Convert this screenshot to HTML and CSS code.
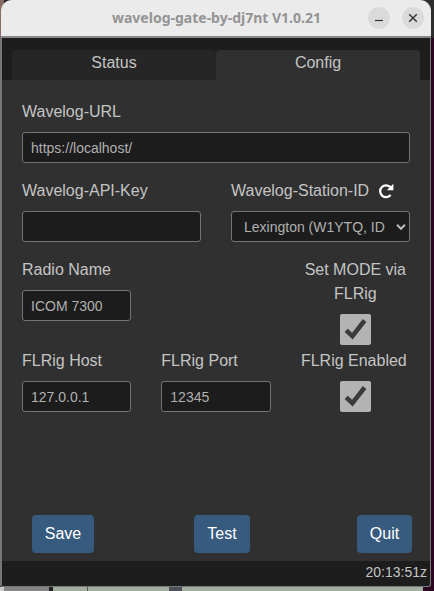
FILE: index.html
```html
<!DOCTYPE html>
<html lang="en">
<head>
<meta charset="utf-8">
<title>wavelog-gate-by-dj7nt V1.0.21</title>
<link rel="stylesheet" href="styles.css">
</head>
<body>
<div class="window">
  <header class="titlebar">
    <span class="title">wavelog-gate-by-dj7nt V1.0.21</span>
    <span class="controls">
      <span class="control"><svg width="22" height="22" viewBox="0 0 22 22"><path d="M7 13.5h8" stroke="#333" stroke-width="1.2"/></svg></span>
      <span class="control"><svg width="22" height="22" viewBox="0 0 22 22"><path d="M7.2 7.2l7.6 7.6M14.8 7.2l-7.6 7.6" stroke="#333" stroke-width="1.4"/></svg></span>
    </span>
  </header>
  <div class="app">
    <nav class="tabs">
      <div class="tab">Status</div>
      <div class="tab active">Config</div>
    </nav>
    <main class="content">
      <div class="row one">
        <div class="field"><label>Wavelog-URL</label><input type="text" value="https://localhost/"></div>
      </div>
      <div class="row two">
        <div class="field"><label>Wavelog-API-Key</label><input type="text"></div>
        <div class="field">
          <label>Wavelog-Station-ID <svg class="reload" width="16" height="16" viewBox="0 0 16 16"><path d="M12.5 4.3A5.9 5.9 0 1 0 12.6 12" fill="none" stroke="#fff" stroke-width="2.3"/><path d="M15.4 .8v6.5H8.9z" fill="#fff"/></svg></label>
          <div class="select">Lexington (W1YTQ, ID<svg class="arrow" width="10" height="8" viewBox="0 0 10 8"><path d="M1 1.8l4 4 4-4" fill="none" stroke="#bbb" stroke-width="2"/></svg></div>
        </div>
      </div>
      <div class="row three radio">
        <div class="field"><label>Radio Name</label><input type="text" value="ICOM 7300"></div>
        <div></div>
        <div class="field center"><label>Set MODE via FLRig</label><span class="check"><svg width="31" height="31" viewBox="0 0 31 31"><path d="M6.2 16.4L12.4 22.2 24.6 6.5" fill="none" stroke="#3b3b3b" stroke-width="4.6"/></svg></span></div>
      </div>
      <div class="row three">
        <div class="field"><label>FLRig Host</label><input type="text" value="127.0.0.1"></div>
        <div class="field"><label>FLRig Port</label><input type="text" value="12345"></div>
        <div class="field center"><label class="enabled">FLRig Enabled</label><span class="check"><svg width="31" height="31" viewBox="0 0 31 31"><path d="M6.2 16.4L12.4 22.2 24.6 6.5" fill="none" stroke="#3b3b3b" stroke-width="4.6"/></svg></span></div>
      </div>
      <div class="buttons">
        <button class="save">Save</button>
        <button class="test">Test</button>
        <button class="quit">Quit</button>
      </div>
    </main>
    <footer class="status">20:13:51z</footer>
  </div>
</div>
<div class="desktop"><span class="panel"></span><span class="mark"></span><span class="line"></span><span class="icon"></span></div>
</body>
</html>
```
FILE: styles.css
```css
* { box-sizing: border-box; }
body {
  margin: 0;
  width: 434px;
  height: 591px;
  overflow: hidden;
  background: linear-gradient(90deg, #8b6c65 0 4px, #27272a 4px 425px, #2d2d2d 425px) 0 0 / 434px 38px no-repeat,
    linear-gradient(#947770, #715b59) 0 38px / 2px 44px no-repeat, #2c0620;
  font: 16px/24px "Liberation Sans", Arial, sans-serif;
  color: #c4c4c4;
}
.window { width: 431px; height: 587px; }
.titlebar {
  height: 36px;
  margin-left: 1px;
  padding-right: 7px;
  display: flex;
  align-items: center;
  background: #ebebeb;
  border-radius: 11px 11px 0 0;
}
.title {
  flex: 1;
  padding-left: 111px;
  font: bold 14px/36px "Noto Sans", "Open Sans", sans-serif;
  color: #949494;
  white-space: nowrap;
}
.controls { display: flex; gap: 12px; }
.control { width: 22px; height: 22px; border-radius: 50%; background: #dadada; }
.control svg { display: block; }
.app {
  height: 551px;
  display: flex;
  flex-direction: column;
  background: #1d1d1d;
  border: solid #777;
  border-width: 2px 1px 1px 2px;
  border-top-color: #888;
  border-radius: 2px 0 3px 2px;
}
.tabs { height: 42px; padding: 12px 10px 0; display: flex; flex: none; }
.tab {
  flex: 1;
  padding-top: 1px;
  text-align: center;
  background: #262626;
  border-radius: 4px 4px 0 0;
}
.active { background: #303030; }
.content { flex: 1; background: #303030; padding: 20px 18px 8px 20px; display: flex; flex-direction: column; }
.row { display: grid; column-gap: 30px; margin: 0 2px 16px 0; flex: none; }
.one { grid-template-columns: 1fr; }
.two { grid-template-columns: 1fr 1fr; }
.three { grid-template-columns: repeat(3, 1fr); }
.radio { margin-bottom: 4px; }
.field { display: flex; flex-direction: column; gap: 8px; min-width: 0; }
label { white-space: nowrap; height: 24px; }
.center { align-items: center; }
.center label { white-space: normal; height: auto; text-align: center; }
.center .enabled { white-space: nowrap; padding-right: 4px; margin-right: -1px; }
input, .select {
  width: 100%;
  height: 31px;
  margin: 0;
  padding: 4px 8px;
  border: 1px solid #747474;
  border-radius: 3px;
  background: #1c1c1c;
  color: #b0b0b0;
  font: 14px/21px "Liberation Sans", Arial, sans-serif;
}
.select { padding: 5px 3px 4px 12px; display: flex; align-items: center; justify-content: space-between; white-space: nowrap; }
.reload { margin-left: 4px; vertical-align: -3px; }
.check { width: 31px; height: 31px; border-radius: 2px; background: #b3b3b3; }
.check svg { display: block; }
.buttons { margin-top: auto; padding-left: 10px; display: flex; }
button {
  height: 38px;
  padding: 0;
  border: 0;
  border-radius: 4px;
  background: #375a7f;
  color: #fff;
  font: 16px/24px "Liberation Sans", Arial, sans-serif;
}
.save { width: 62px; }
.test { width: 56px; margin-left: 100px; }
.quit { width: 55px; margin-left: 107px; }
.status { height: 25px; padding-right: 3px; text-align: right; font-size: 14px; line-height: 22px; flex: none; }
.desktop { height: 4px; width: 423px; display: flex; background: #a3b09f; }
.panel { width: 49px; background: #858385; border-left: 4px solid #ccc; }
.mark { width: 4px; background: #222; }
.line { width: 35px; border-right: 1px solid #555; }
.icon { width: 13px; margin-left: 81px; background: #505058; }
```
